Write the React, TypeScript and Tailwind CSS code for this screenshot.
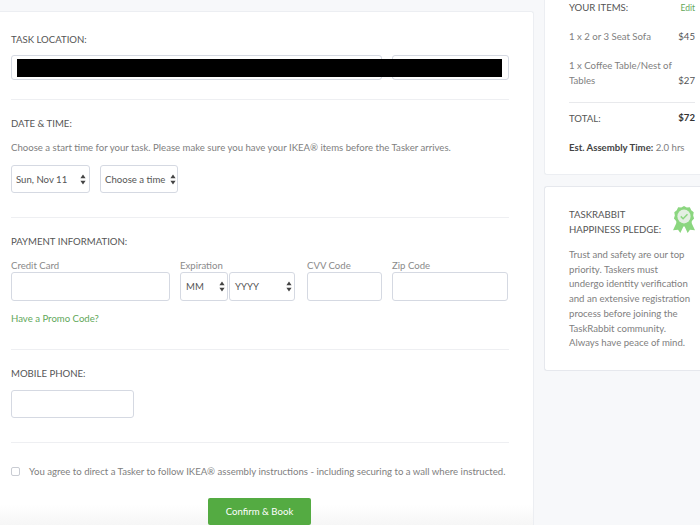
const font = { fontFamily: '"Lato", "Open Sans", sans-serif' };

function Arrows() {
  return (
    <svg width="6" height="11" viewBox="0 0 6 11" className="shrink-0">
      <path d="M3 0.5 L5.6 4.3 H0.4 Z M3 10.5 L0.4 6.7 H5.6 Z" fill="#444" />
    </svg>
  );
}

function Select({ text, className }: { text: string; className: string }) {
  return (
    <div className={`flex items-center justify-between border border-[#d5d9e2] rounded-[3px] bg-white text-[9.6px] text-[#555] whitespace-nowrap ${className}`}>
      <span className="pt-[2px]">{text}</span>
      <Arrows />
    </div>
  );
}

function Field({ label, className, children }: { label: string; className: string; children?: any }) {
  return (
    <div className={`flex flex-col ${className}`}>
      <div className="h-[14px] pt-[1px] leading-[14px] text-[9.6px] text-[#8a8a8a]">{label}</div>
      {children ?? <div className="h-[29px] border border-[#d5d9e2] rounded-[3px]" />}
    </div>
  );
}

function Heading({ children }: { children: any }) {
  return <div className="pt-[1px] -mb-[1px] text-[9.6px] leading-[14px] text-[#555]">{children}</div>;
}

export default function App() {
  return (
    <div style={font} className="relative w-[700px] h-[525px] overflow-hidden bg-[#f7f8fa] flex items-start">
      <div className="w-[534px] h-[525px] pt-[11px] shrink-0">
        <div className="h-[514px] bg-gradient-to-b from-white from-[96%] to-[#f6f6f6] border-t border-r border-[#eceef2] rounded-tr-[3px] pl-[11px] pr-[24px]">
          <div className="pt-[20px]"><Heading>TASK LOCATION:</Heading></div>
          <div className="relative flex gap-[10px] mt-[9px] h-[25px]">
            <div className="w-[371px] border border-[#d5d9e2] rounded-[3px]" />
            <div className="w-[117px] border border-[#d5d9e2] rounded-[3px]" />
            <div className="absolute left-[6px] top-[4px] w-[485px] h-[18px] bg-black" />
          </div>
          <div className="mt-[19px] border-t border-[#eeeff2]" />

          <div className="pt-[16px]"><Heading>DATE &amp; TIME:</Heading></div>
          <div className="mt-[10px] pt-[1px] -mb-[1px] text-[9.6px] leading-[14px] text-[#808080] whitespace-nowrap">
            Choose a start time for your task. Please make sure you have your IKEA® items before the Tasker arrives.
          </div>
          <div className="flex gap-[10px] mt-[11px]">
            <Select text="Sun, Nov 11" className="w-[79px] h-[28px] pl-[4px] pr-[3px]" />
            <Select text="Choose a time" className="w-[78px] h-[28px] pl-[4px] pr-[1px]" />
          </div>
          <div className="mt-[24px] border-t border-[#eeeff2]" />

          <div className="pt-[16px]"><Heading>PAYMENT INFORMATION:</Heading></div>
          <div className="flex mt-[10px]">
            <Field label="Credit Card" className="w-[159px]" />
            <Field label="Expiration" className="w-[115px] ml-[10px]">
              <div className="flex gap-[1px]">
                <Select text="MM" className="w-[48px] h-[29px] pl-[5px] pr-[2px]" />
                <Select text="YYYY" className="w-[66px] h-[29px] pl-[5px] pr-[2px]" />
              </div>
            </Field>
            <Field label="CVV Code" className="w-[75px] ml-[12px]" />
            <Field label="Zip Code" className="w-[116px] ml-[10px]" />
          </div>
          <div className="mt-[10px] pt-[1px] -mb-[1px] text-[9.6px] leading-[14px] text-[#62a85a]">Have a Promo Code?</div>
          <div className="mt-[24px] border-t border-[#eeeff2]" />

          <div className="pt-[16px]"><Heading>MOBILE PHONE:</Heading></div>
          <div className="mt-[10px] w-[123px] h-[28px] border border-[#d5d9e2] rounded-[3px]" />
          <div className="mt-[24px] border-t border-[#eeeff2]" />

          <div className="flex items-center mt-[21px] h-[14px] text-[9.6px] text-[#808080] whitespace-nowrap">
            <div className="w-[9px] h-[9px] border border-[#c9ccd3] rounded-[2px] mr-[9px] shrink-0" />
            <span className="pt-[2px]">You agree to direct a Tasker to follow IKEA® assembly instructions - including securing to a wall where instructed.</span>
          </div>
          <div className="flex justify-center mt-[20px] pr-[1px]">
            <div className="w-[103px] h-[27px] pt-[2px] rounded-[2px] bg-[#54ab42] text-white text-[9.6px] flex items-center justify-center">Confirm &amp; Book</div>
          </div>
        </div>
      </div>

      <div className="ml-[10px] w-[156px] shrink-0 flex flex-col gap-[11px]">
        <div className="h-[175px] bg-white border border-t-0 border-r-0 border-[#eceef2] rounded-bl-[3px] pl-[24px] pr-[5px] text-[9.6px]">
          <div className="flex justify-between items-center h-[14px] pt-[2px] text-[#555]">
            <span>YOUR ITEMS:</span>
            <span className="text-[8.5px] text-[#62a85a]">Edit</span>
          </div>
          <div className="flex justify-between mt-[15px] pt-[1px] -mb-[1px] leading-[14px] text-[#808080]">
            <span>1 x 2 or 3 Seat Sofa</span>
            <span className="text-[#555]">$45</span>
          </div>
          <div className="flex justify-between items-end mt-[15px] leading-[15px] text-[#808080]">
            <span className="w-[105px]">1 x Coffee Table/Nest of Tables</span>
            <span className="text-[#555]">$27</span>
          </div>
          <div className="mt-[14px] border-t border-[#e8e9ec]" />
          <div className="flex justify-between mt-[9px] leading-[14px] text-[#555]">
            <span>TOTAL:</span>
            <span className="font-bold text-[#333] -mt-[1px]">$72</span>
          </div>
          <div className="mt-[15px] leading-[14px] text-[#808080] whitespace-nowrap">
            <b className="text-[#444]">Est. Assembly Time:</b> 2.0 hrs
          </div>
        </div>

        <div className="h-[185px] bg-white border border-r-0 border-[#e6e8ed] rounded-l-[3px] pl-[24px] pr-[5px] pt-[20px] text-[9.6px]">
          <div className="flex justify-between">
            <div className="leading-[15px] text-[#555]">TASKRABBIT<br />HAPPINESS PLEDGE:</div>
            <svg width="22" height="28" viewBox="0 0 24 29" preserveAspectRatio="none" className="-mt-[1px]">
              <path d="M5 15 L0 25 L5.5 24.5 L8 28 L12 20 L16 28 L18.5 24.5 L24 25 L19 15 Z" fill="#8bd67f" />
              <path d="M12 0 L15 1.6 L18.4 1.4 L19.9 4.4 L22.6 6.4 L22 9.8 L23 13 L20.6 15.5 L19.8 18.8 L16.4 19.3 L13.8 21.4 L12 21 L10.2 21.4 L7.6 19.3 L4.2 18.8 L3.4 15.5 L1 13 L2 9.8 L1.4 6.4 L4.1 4.4 L5.6 1.4 L9 1.6 Z" fill="#8bd67f" />
              <circle cx="12" cy="10.8" r="7.2" fill="#e4efe2" />
              <path d="M8.5 10.8 L11 13.2 L15.8 8.6" fill="none" stroke="#8bd67f" strokeWidth="1.6" />
            </svg>
          </div>
          <div className="mt-[11px] leading-[14.7px] text-[#808080] w-[126px]">
            Trust and safety are our top priority. Taskers must undergo identity verification and an extensive registration process before joining the TaskRabbit community. Always have peace of mind.
          </div>
        </div>
      </div>
    </div>
  );
}
